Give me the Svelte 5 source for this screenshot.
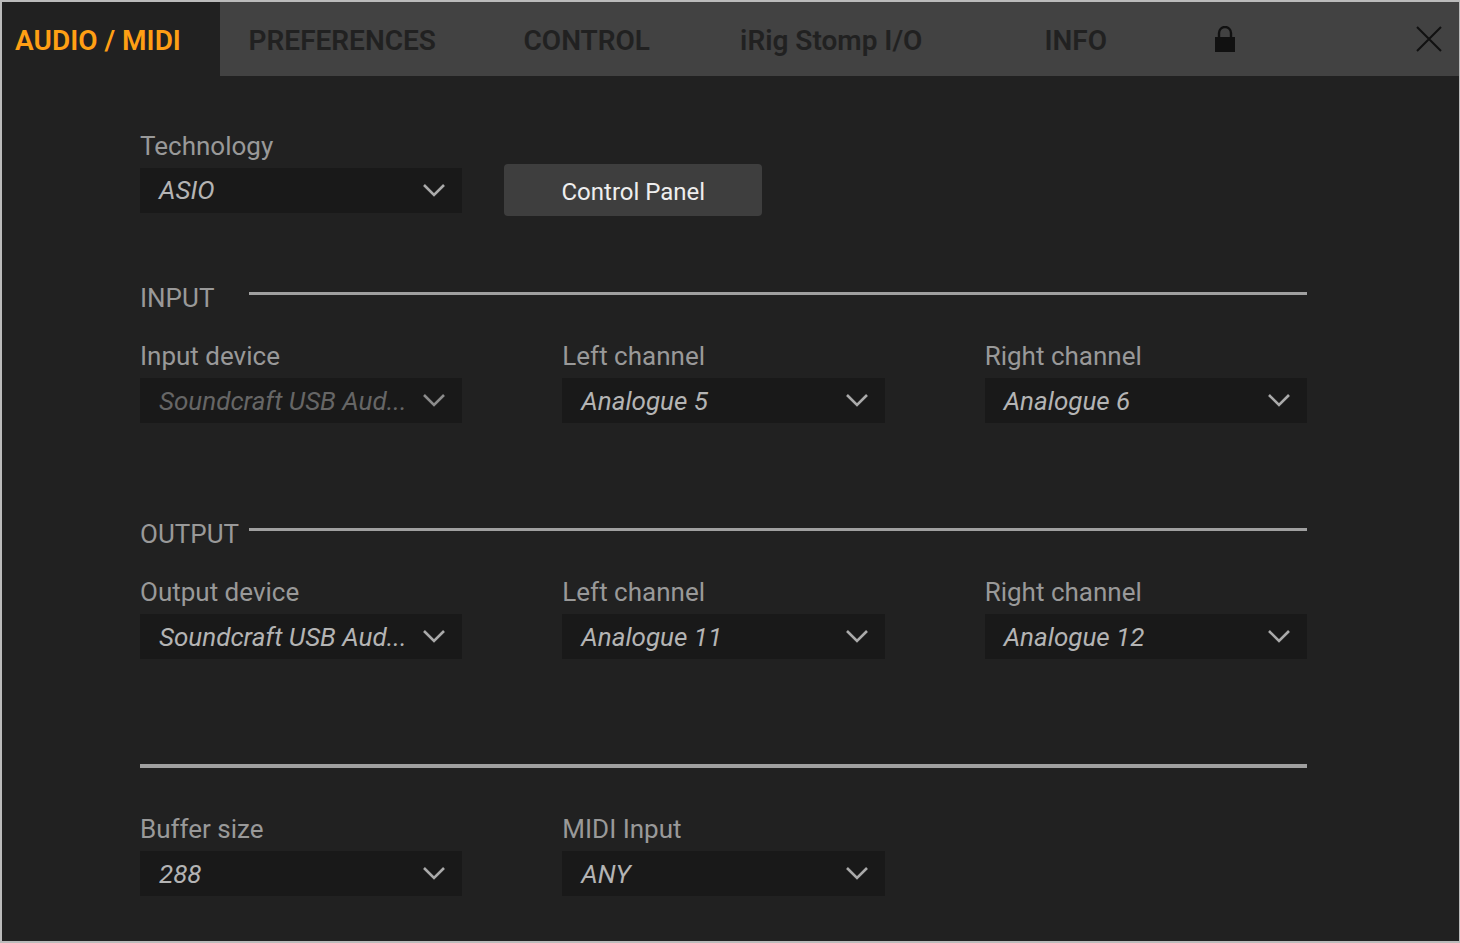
<!-- App.svelte - Audio / MIDI settings window -->
<script lang="ts">
	type Field = {
		id: string;
		label: string;
		options: string[];
		disabled?: boolean;
	};

	const tabs = ['AUDIO / MIDI', 'PREFERENCES', 'CONTROL', 'iRig Stomp I/O', 'INFO'];
	let activeTab = $state('AUDIO / MIDI');

	const technology: Field = { id: 'technology', label: 'Technology', options: ['ASIO'] };

	const sections: { title: string; fields: Field[] }[] = [
		{
			title: 'INPUT',
			fields: [
				{ id: 'input-device', label: 'Input device', options: ['Soundcraft USB Aud...'], disabled: true },
				{ id: 'input-left', label: 'Left channel', options: ['Analogue 5'] },
				{ id: 'input-right', label: 'Right channel', options: ['Analogue 6'] }
			]
		},
		{
			title: 'OUTPUT',
			fields: [
				{ id: 'output-device', label: 'Output device', options: ['Soundcraft USB Aud...'] },
				{ id: 'output-left', label: 'Left channel', options: ['Analogue 11'] },
				{ id: 'output-right', label: 'Right channel', options: ['Analogue 12'] }
			]
		}
	];

	const general: Field[] = [
		{ id: 'buffer-size', label: 'Buffer size', options: ['288'] },
		{ id: 'midi-input', label: 'MIDI Input', options: ['ANY'] }
	];
</script>

{#snippet dropdown(field: Field)}
	<div class="dropdown" class:disabled={field.disabled}>
		<select id={field.id} disabled={field.disabled}>
			{#each field.options as option}
				<option>{option}</option>
			{/each}
		</select>
		<svg class="chevron" viewBox="0 0 22 14" aria-hidden="true">
			<path d="M1 1 L11 11 L21 1" />
		</svg>
	</div>
{/snippet}

{#snippet labelled(field: Field)}
	<div class="field">
		<label for={field.id}>{field.label}</label>
		{@render dropdown(field)}
	</div>
{/snippet}

<div class="window">
	<nav class="tabs">
		{#each tabs as tab}
			<button class="tab" class:active={tab === activeTab} onclick={() => (activeTab = tab)}>
				{tab}
			</button>
		{/each}
		<button class="lock" aria-label="Lock">
			<svg viewBox="0 0 20 26" aria-hidden="true">
				<path class="shackle" d="M4 12 V7 a6 6 0 0 1 12 0 V12" />
				<rect x="0" y="11" width="20" height="15" />
			</svg>
		</button>
		<button class="close" aria-label="Close">
			<svg viewBox="0 0 26 26" aria-hidden="true">
				<path d="M1 1 L25 25 M25 1 L1 25" />
			</svg>
		</button>
	</nav>

	<main class="panel">
		<div class="technology">
			<label for={technology.id}>{technology.label}</label>
			<div class="technology-row">
				{@render dropdown(technology)}
				<button class="control-panel">Control Panel</button>
			</div>
		</div>

		{#each sections as section}
			<section>
				<div class="section-header">
					<h2>{section.title}</h2>
					<div class="rule"></div>
				</div>
				<div class="fields">
					{#each section.fields as field}
						{@render labelled(field)}
					{/each}
				</div>
			</section>
		{/each}

		<div class="fields general">
			{#each general as field}
				{@render labelled(field)}
			{/each}
		</div>
	</main>
</div>

<style>
	:global(body) {
		margin: 0;
		background: #212121;
	}

	.window {
		box-sizing: border-box;
		min-height: 100vh;
		border: 2px solid #bbbbbb;
		border-right-width: 1px;
		background: #212121;
		color: #999999;
		font-family: Roboto, sans-serif;
		font-size: 26px;
		line-height: 32px;
	}

	button,
	select {
		margin: 0;
		padding: 0;
		border: none;
		border-radius: 0;
		font: inherit;
	}

	button {
		cursor: pointer;
	}

	/* Tab bar */
	.tabs {
		display: grid;
		grid-template-columns: 436fr repeat(4, 489fr) 108fr 414fr;
		height: 74px;
		background: #424242;
	}

	.tab {
		padding-top: 4px;
		background: transparent;
		color: #212121;
		font-size: 28px;
		font-weight: 600;
		white-space: nowrap;
	}

	.tab.active {
		padding-right: 26px;
		background: #212121;
		color: #ff9f14;
	}

	.lock,
	.close {
		display: flex;
		align-items: center;
		background: transparent;
	}

	.lock {
		justify-content: center;
	}

	.lock svg {
		width: 20px;
		height: 26px;
		fill: #111111;
	}

	.lock .shackle {
		fill: none;
		stroke: #111111;
		stroke-width: 2.4;
	}

	.close {
		justify-content: flex-end;
		padding-right: 17px;
	}

	.close svg {
		width: 26px;
		height: 26px;
		stroke: #111111;
		stroke-width: 2;
	}

	/* Settings */
	.panel {
		padding: 54px 152px 44px 138px;
	}

	label {
		display: block;
	}

	.dropdown {
		position: relative;
	}

	select {
		display: block;
		width: 100%;
		height: 45px;
		padding: 0 48px 0 9px;
		appearance: none;
		background: #191919;
		color: #b4b4b4;
		font-style: italic;
		text-indent: 10px;
		white-space: nowrap;
	}

	select:disabled {
		color: #666666;
		opacity: 1;
	}

	.chevron {
		position: absolute;
		top: 16px;
		right: 17px;
		width: 22px;
		height: 14px;
		fill: none;
		stroke: #aaaaaa;
		stroke-width: 2.6;
		pointer-events: none;
	}

	.disabled .chevron {
		stroke: #8c8c8c;
	}

	.technology {
		margin-bottom: 66px;
	}

	.technology-row {
		display: flex;
		align-items: center;
		gap: 42px;
		margin-top: 2px;
	}

	.technology-row .dropdown {
		flex: 0 0 calc((100% - 200px) / 3);
	}

	.control-panel {
		width: 258px;
		height: 52px;
		padding-top: 4px;
		border-radius: 4px;
		background: #3e3e3e;
		color: #eeeeee;
		font-size: 24px;
	}

	section {
		margin-bottom: 95px;
	}

	.section-header {
		display: grid;
		grid-template-columns: 109px 1fr;
		margin-bottom: 26px;
	}

	h2 {
		margin: 0;
		font-size: 26px;
		font-weight: 400;
	}

	.rule {
		height: 3px;
		margin-top: 10px;
		background: #a0a0a0;
	}

	.fields {
		display: grid;
		grid-template-columns: repeat(3, 1fr);
		column-gap: 100px;
	}

	.field label {
		margin-bottom: 6px;
	}

	.general {
		margin-top: 105px;
		padding-top: 45px;
		border-top: 4px solid #a0a0a0;
	}
</style>
